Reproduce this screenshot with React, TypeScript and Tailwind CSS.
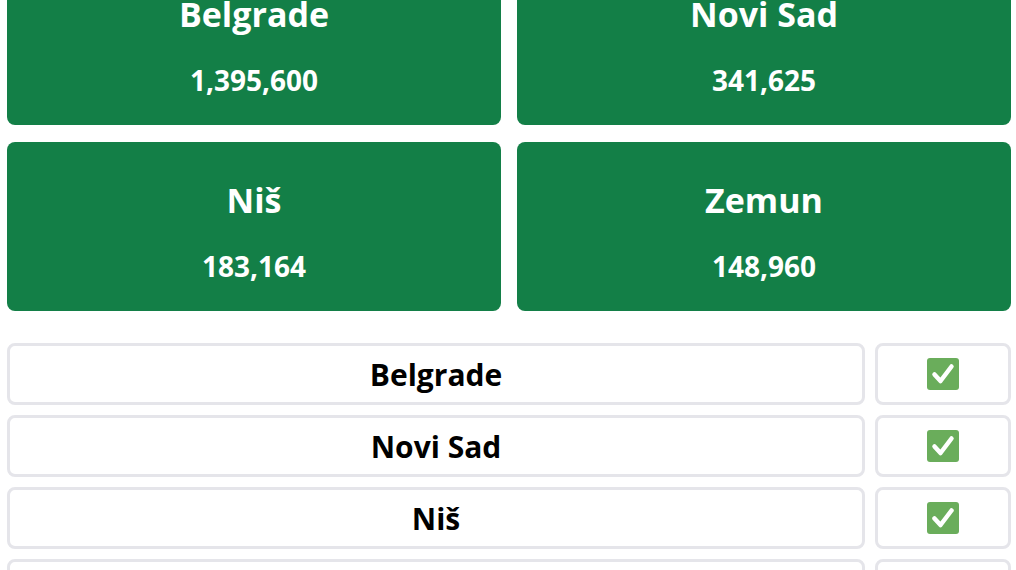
const CITIES = [
  { name: "Belgrade", population: 1395600, visited: true },
  { name: "Novi Sad", population: 341625, visited: true },
  { name: "Niš", population: 183164, visited: true },
  { name: "Zemun", population: 148960, visited: true },
];

// 체크 표시 아이콘 (✅ 모양)
function CheckBox() {
  return (
    <svg width="32" height="32" viewBox="0 0 32 32">
      <rect x="0" y="0" width="32" height="32" rx="3" fill="#6aad5b" />
      <path d="M7.5 16.5 L13.5 23 L24.5 8.5" fill="none" stroke="#ffffff" strokeWidth="4.5" strokeLinecap="round" strokeLinejoin="round" />
    </svg>
  );
}

export default function App() {
  return (
    <div className="h-screen flex flex-col justify-center bg-white" style={{ fontFamily: "'Open Sans', 'Noto Sans', sans-serif" }}>
      <div className="pt-[7px] pl-[7px] pr-[5px]">
        {/* 도시 카드 */}
        <div className="grid grid-cols-2 gap-x-4 gap-y-[17px]">
          {CITIES.map((city) => (
            <div key={city.name} className="h-[169px] bg-[#137f47] rounded-lg text-white font-bold flex flex-col items-center pt-[38px]">
              <h2 className="text-[34px] leading-[40px]">{city.name}</h2>
              <p className="text-[28px] leading-[32px] mt-[30px]">{city.population.toLocaleString("en-US")}</p>
            </div>
          ))}
        </div>

        {/* 방문 목록 */}
        <div className="mt-8 flex flex-col gap-[10px]">
          {CITIES.map((city) => (
            <div key={city.name} className="flex gap-[10px] h-[62px]">
              <div className="flex-1 border-[3px] border-[#e5e5ea] rounded-lg flex items-center justify-center text-[30px] font-bold text-black">
                {city.name}
              </div>
              <div className="w-[136px] border-[3px] border-[#e5e5ea] rounded-lg flex items-center justify-center">
                {city.visited && <CheckBox />}
              </div>
            </div>
          ))}
        </div>
      </div>
    </div>
  );
}
